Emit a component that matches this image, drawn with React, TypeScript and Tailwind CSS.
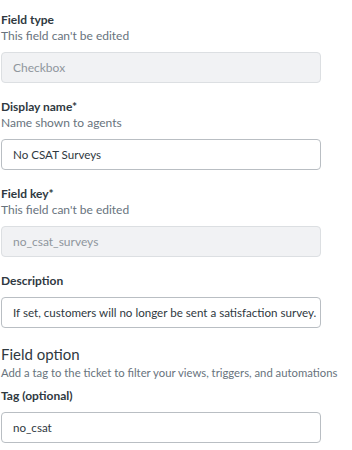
import React from "react";

const font = { fontFamily: 'Lato, "Noto Sans", sans-serif' };

function Field({
  label,
  hint,
  value,
  disabled,
}: {
  label: string;
  hint?: string;
  value: string;
  disabled?: boolean;
}) {
  return (
    <div className="flex flex-col">
      <label className="text-[12px] leading-[16px] font-bold text-[#2f3941]">{label}</label>
      {hint && <p className="text-[12px] leading-[16px] text-[#68737d]">{hint}</p>}
      <div
        className={
          disabled
            ? "mt-2 w-[320px] h-[31px] flex items-center px-[11px] rounded-[4px] border border-[#dcdfe2] bg-[#f1f2f4] text-[12px] text-[#8f969d] whitespace-nowrap"
            : "mt-2 w-[320px] h-[31px] flex items-center px-[11px] rounded-[4px] border border-[#b9bec3] bg-white text-[11.6px] text-[#2f3941] whitespace-nowrap"
        }
      >
        {value}
      </div>
    </div>
  );
}

export default function App() {
  return (
    <div className="w-[352px] h-[450px] bg-white pl-[1px] pt-[12px] flex flex-col gap-4" style={font}>
      <Field label="Field type" hint="This field can't be edited" value="Checkbox" disabled />
      <Field label="Display name*" hint="Name shown to agents" value="No CSAT Surveys" />
      <Field label="Field key*" hint="This field can't be edited" value="no_csat_surveys" disabled />
      <Field label="Description" value="If set, customers will no longer be sent a satisfaction survey." />

      {/* Field option section */}
      <div className="flex flex-col">
        <h3 className="text-[15px] leading-[21px] text-[#2f3941]">Field option</h3>
        <p className="text-[11.3px] leading-[16px] text-[#68737d] whitespace-nowrap">
          Add a tag to the ticket to filter your views, triggers, and automations
        </p>
        <div className="mt-[7px]">
          <Field label="Tag (optional)" value="no_csat" />
        </div>
      </div>
    </div>
  );
}
